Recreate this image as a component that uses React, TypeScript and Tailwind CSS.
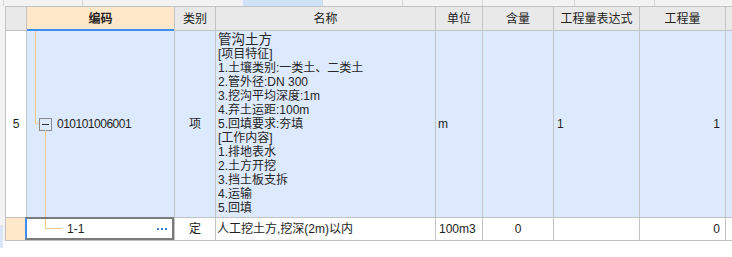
import React from 'react';

// 清单明细表格（局部截图）
const features = [
  '[项目特征]',
  '1.土壤类别:一类土、二类土',
  '2.管外径:DN 300',
  '3.挖沟平均深度:1m',
  '4.弃土运距:100m',
  '5.回填要求:夯填',
  '[工作内容]',
  '1.排地表水',
  '2.土方开挖',
  '3.挡土板支拆',
  '4.运输',
  '5.回填',
];

function HeaderCell({ children, className = '' }: { children?: React.ReactNode; className?: string }) {
  return (
    <div className={`flex items-center justify-center bg-[#e9e9e9] text-[12px] text-[#222] ${className}`}>
      {children}
    </div>
  );
}

export default function App() {
  return (
    <div
      lang="zh-CN"
      className="relative h-[257px] w-[732px] overflow-hidden bg-white font-['Liberation_Sans','Noto_Sans_CJK_SC',sans-serif] text-[#1e1e1e]"
    >
      {/* 上方残留的一行 */}
      <div className="flex h-[6px] bg-[#f3f3f3]">
        <div className="w-[4px] shrink-0 border-r border-[#d6d6d6]" />
        <div className="w-[79px] shrink-0 border-r border-[#d6d6d6]" />
        <div className="w-[160px] shrink-0" />
        <div className="w-[80px] shrink-0 border-r border-[#d6d6d6] bg-[#cfe3f8]" />
        <div className="w-[80px] shrink-0 border-r border-[#d6d6d6]" />
        <div className="w-[80px] shrink-0 border-r border-[#d6d6d6]" />
        <div className="w-[92px] shrink-0 border-r border-[#d6d6d6]" />
        <div className="w-[80px] shrink-0 border-r border-[#d6d6d6]" />
        <div className="flex-1" />
      </div>

      <div className="flex">
        {/* 左侧边栏 */}
        <div className="relative w-[5px] shrink-0 self-stretch bg-[#f3f3f3]">
          <div className="absolute left-0 top-[219px] h-[23px] w-[3px] bg-[#d9e7f8]" />
        </div>

        <div className="grid shrink-0 grid-cols-[20px_147px_40px_219px_46px_70px_85px_85px_40px] grid-rows-[23px_186px_22px] gap-px bg-[#c3c3c3] p-px">
          {/* 表头 */}
          <HeaderCell />
          <HeaderCell className="relative bg-[#fee8c9] font-bold">
            编码
            <div className="absolute -bottom-px left-0 right-0 h-[2px] bg-[#3d8ef0]" />
          </HeaderCell>
          <HeaderCell>类别</HeaderCell>
          <HeaderCell>名称</HeaderCell>
          <HeaderCell>单位</HeaderCell>
          <HeaderCell>含量</HeaderCell>
          <HeaderCell>工程量表达式</HeaderCell>
          <HeaderCell>工程量</HeaderCell>
          <HeaderCell />

          {/* 清单行 */}
          <div className="flex items-center justify-center bg-white text-[12px]">5</div>
          <div className="relative flex items-center bg-[#dde9fc] pl-[12px] text-[12px]">
            <div className="absolute left-[8px] top-0 h-[93px] w-px bg-[#f6c98c]" />
            <div className="absolute left-[8px] top-[92px] h-px w-[4px] bg-[#f6c98c]" />
            <div className="absolute left-[18px] top-[99px] bottom-[-1px] w-px bg-[#f6c98c]" />
            <div className="flex h-[13px] w-[13px] items-center justify-center border border-[#8a8a8a] bg-[#dde9fc]">
              <div className="h-px w-[7px] bg-[#333]" />
            </div>
            <span className="ml-[5px] tracking-[-0.5px]">010101006001</span>
          </div>
          <div className="flex items-center justify-center bg-[#dde9fc] text-[12px]">项</div>
          <div className="bg-[#dde9fc] pl-[2px] pt-[2px] text-[12px] leading-[14px] text-[#262626]">
            <div className="text-[13.5px] leading-[14px]">管沟土方</div>
            {features.map((line) => (
              <div key={line}>{line}</div>
            ))}
          </div>
          <div className="flex items-center bg-[#dde9fc] pl-[2px] text-[12px]">m</div>
          <div className="bg-[#dde9fc]" />
          <div className="flex items-center bg-[#dde9fc] pl-[3px] text-[12px]">1</div>
          <div className="flex items-center justify-end bg-[#dde9fc] pr-[5px] text-[12px]">1</div>
          <div className="bg-[#dde9fc]" />

          {/* 定额子目行 */}
          <div className="bg-[#fee8c9]" />
          <div className="relative flex items-center bg-white pl-[40px] pr-[7px] text-[12px]">
            <div className="absolute left-[18px] -top-px h-[12px] w-px bg-[#f6c98c]" />
            <div className="absolute left-[18px] top-[10px] h-px w-[17px] bg-[#f6c98c]" />
            <span>1-1</span>
            <div className="ml-auto flex gap-[2px]">
              <span className="h-[2px] w-[2px] bg-[#3a7fc8]" />
              <span className="h-[2px] w-[2px] bg-[#3a7fc8]" />
              <span className="h-[2px] w-[2px] bg-[#3a7fc8]" />
            </div>
            <div className="pointer-events-none absolute -left-[2px] -top-px bottom-0 right-0 border-2 border-[#7a7a7a] border-l-[#3d8ef0]" />
          </div>
          <div className="flex items-center justify-center bg-white text-[12px]">定</div>
          <div className="flex items-center bg-white pl-[1px] text-[12px]">人工挖土方,挖深(2m)以内</div>
          <div className="flex items-center bg-white pl-[3px] text-[12px]">100m3</div>
          <div className="flex items-center justify-center bg-white text-[12px]">0</div>
          <div className="bg-white" />
          <div className="flex items-center justify-end bg-white pr-[5px] text-[12px]">0</div>
          <div className="bg-white" />
        </div>
      </div>
    </div>
  );
}
